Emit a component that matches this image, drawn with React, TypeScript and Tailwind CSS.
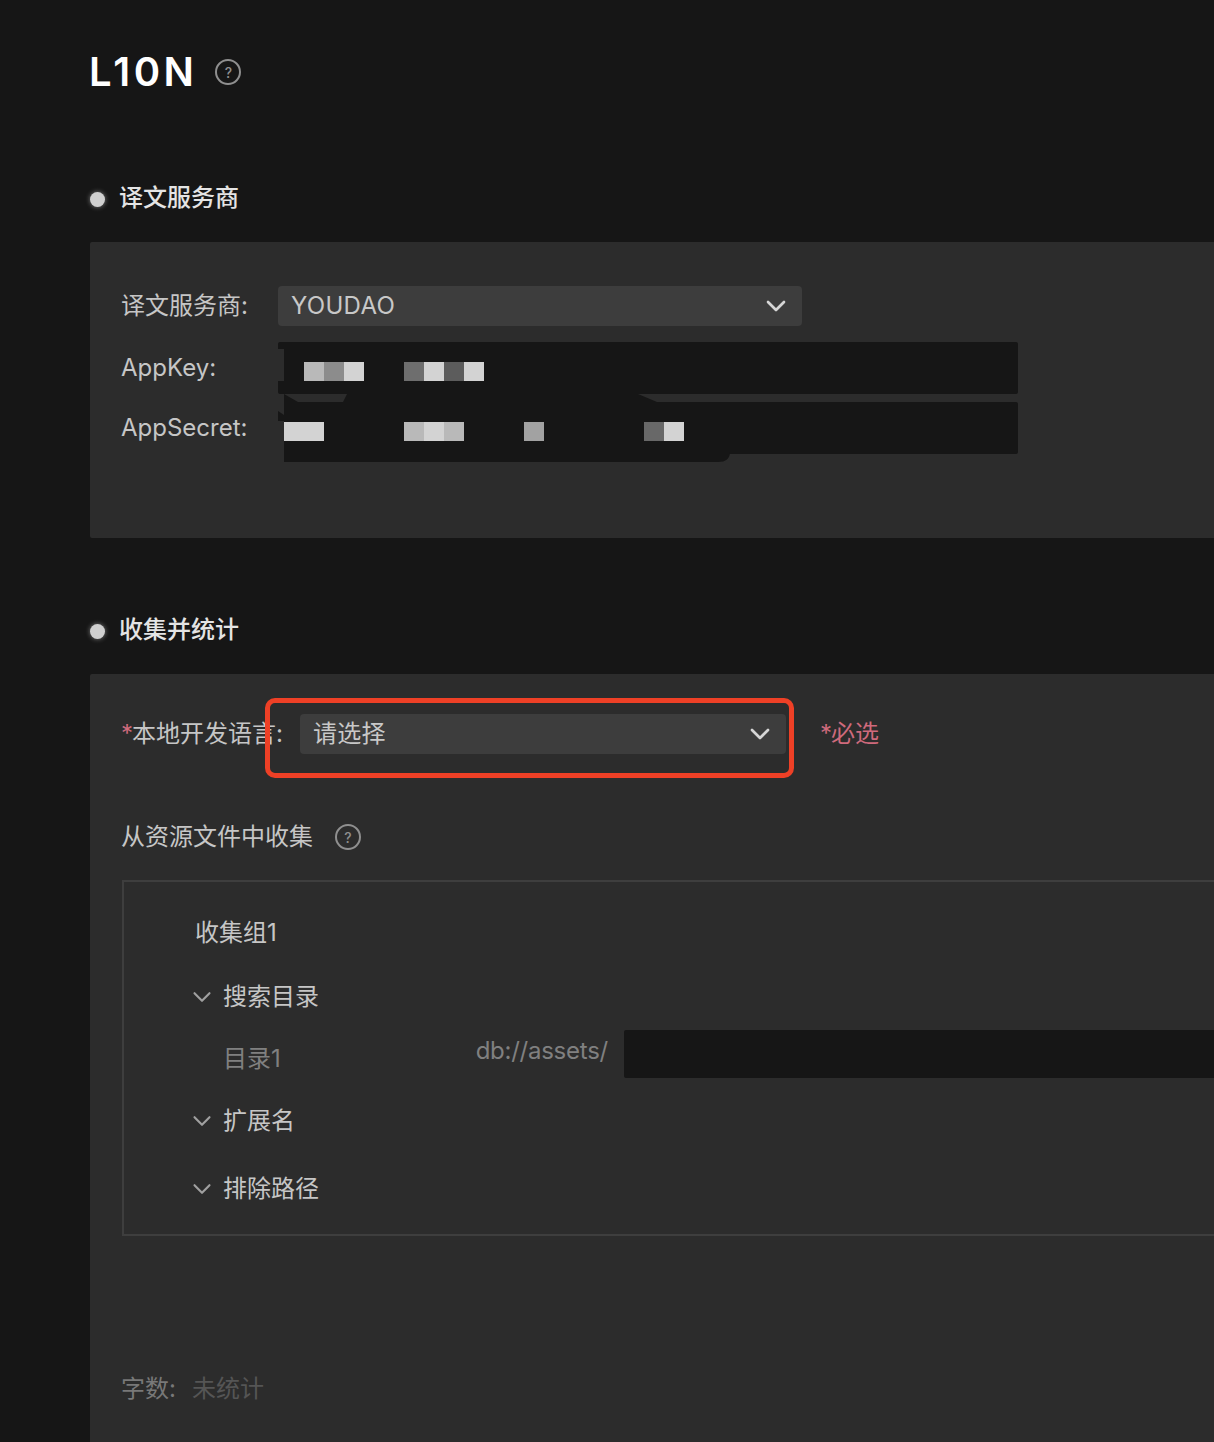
import { ChevronDown } from 'lucide-react'

const cjk = 'font-["Inter","Noto_Sans_CJK_SC",sans-serif]'

const HelpIcon = ({ size = 26 }: { size?: number }) => (
  <span
    className="flex items-center justify-center rounded-full border-2 border-[#8f8f8f] font-medium text-[#8f8f8f]"
    style={{ width: size, height: size, fontSize: 14 }}
  >
    ?
  </span>
)

const SectionHead = ({ title }: { title: string }) => (
  <div className="flex h-[32px] items-center">
    <span className="h-[15px] w-[15px] translate-y-[1px] rounded-full bg-[#d0d0d0] shadow-[0_0_5px_rgba(255,255,255,0.45)]" />
    <span className="ml-[14px] text-[24px] font-medium leading-[32px] text-[#e4e4e4]">{title}</span>
  </div>
)

const Select = ({ value, className }: { value: string; className: string }) => (
  <div className={`flex h-[40px] items-center justify-between rounded-[4px] bg-[#3d3d3d] pl-[13px] pr-[10px] text-[24px] text-[#c8c8c8] ${className}`}>
    <span className="tracking-[0.3px]">{value}</span>
    <ChevronDown size={32} strokeWidth={2} className="text-[#d6d6d6]" />
  </div>
)

const Mosaic = ({ cells, className }: { cells: string[]; className: string }) => (
  <div className={`absolute flex h-[19px] ${className}`}>
    {cells.map((c, i) => (
      <span key={i} className={`h-full w-[20px] ${c}`} />
    ))}
  </div>
)

const TreeRow = ({ label, className }: { label: string; className: string }) => (
  <div className={`flex items-center text-[24px] leading-[32px] text-[#c6c6c6] ${className}`}>
    <ChevronDown size={30} strokeWidth={1.7} className="-m-[4px] text-[#a0a0a0]" />
    <span className="ml-[10px]">{label}</span>
  </div>
)

export default function App() {
  return (
    <div className={`relative h-[1442px] w-[1214px] overflow-hidden bg-[#161616] pl-[90px] pt-[46px] ${cjk}`}>
      <div className="flex h-[52px] items-center">
        <h1 className="-ml-[1px] text-[40px] font-semibold leading-[52px] tracking-[3.5px] text-white">L10N</h1>
        <span className="ml-[18px]"><HelpIcon /></span>
      </div>

      <div className="mt-[84px]"><SectionHead title="译文服务商" /></div>

      <section className="relative mt-[28px] h-[296px] w-[1200px] rounded-[2px] bg-[#2c2c2c] px-[32px] pt-[44px]">
        <div className="flex items-center">
          <label className="-ml-[1px] w-[157px] text-[24px] text-[#c6c6c6]">译文服务商:</label>
          <Select value="YOUDAO" className="w-[524px]" />
        </div>
        <div className="mt-[16px] flex items-center">
          <label className="-ml-[1px] w-[157px] text-[24px] text-[#c6c6c6]">AppKey:</label>
          <div className="h-[52px] w-[740px] rounded-[2px] bg-[#161616]" />
        </div>
        <div className="mt-[8px] flex items-center">
          <label className="-ml-[1px] w-[157px] text-[24px] text-[#c6c6c6]">AppSecret:</label>
          <div className="h-[52px] w-[740px] rounded-[2px] bg-[#161616]" />
        </div>

        {/* hand drawn redaction over the keys */}
        <svg className="absolute left-[188px] top-[100px]" width="460" height="124" viewBox="278 342 460 124">
          <path d="M284 394 L298 402 L343 402 L347 394 L638 394 L657 402 L730 402 L730 452 Q730 462 718 462 L284 462 Z" fill="#161616" />
          <path d="M278 349 H284 V381 H278 Z M278 394 H284 V415 L278 411 Z M278 421 H284 V454 H278 Z" fill="#2c2c2c" />
        </svg>
        <Mosaic className="left-[214px] top-[120px]" cells={['bg-[#b9b9b9]', 'bg-[#8c8c8c]', 'bg-[#d3d3d3]']} />
        <Mosaic className="left-[314px] top-[120px]" cells={['bg-[#6e6e6e]', 'bg-[#d3d3d3]', 'bg-[#5c5c5c]', 'bg-[#d3d3d3]']} />
        <Mosaic className="left-[194px] top-[180px]" cells={['bg-[#d3d3d3]', 'bg-[#d3d3d3]']} />
        <Mosaic className="left-[314px] top-[180px]" cells={['bg-[#b9b9b9]', 'bg-[#d3d3d3]', 'bg-[#b9b9b9]']} />
        <Mosaic className="left-[434px] top-[180px]" cells={['bg-[#a2a2a2]']} />
        <Mosaic className="left-[554px] top-[180px]" cells={['bg-[#686868]', 'bg-[#d3d3d3]']} />
      </section>

      <div className="mt-[76px]"><SectionHead title="收集并统计" /></div>

      <section className="relative mt-[28px] h-[800px] w-[1200px] rounded-[2px] bg-[#2c2c2c] px-[32px] pt-[40px]">
        <div className="flex items-center">
          <label className="-ml-[1px] w-[179px] text-[24px] text-[#c6c6c6]">
            <span className="-mr-[1px] text-[#cf6a7c]">*</span>本地开发语言:
          </label>
          <Select value="请选择" className="w-[486px]" />
          <span className="ml-[34px] text-[24px] text-[#cf6a7c]">
            <span className="-mr-[1px]">*</span>必选
          </span>
        </div>

        {/* red annotation from the screenshot */}
        <div className="absolute left-[175px] top-[24px] h-[80px] w-[529px] rounded-[10px] border-[5px] border-[#ee4026]" />

        <div className="-ml-[1px] mt-[67px] flex h-[32px] items-center text-[24px] text-[#c6c6c6]">
          从资源文件中收集
          <span className="ml-[22px]"><HelpIcon /></span>
        </div>

        <div className="relative mt-[27px] h-[356px] w-[1200px] border-2 border-[#3e3e3e] pl-[71px] pt-[35px]">
          <div className="text-[24px] leading-[32px] text-[#c6c6c6]">收集组1</div>
          <TreeRow label="搜索目录" className="-ml-[4px] mt-[32px]" />
          <div className="mt-[17px] flex h-[48px] items-center">
            <span className="ml-[28px] w-[254px] translate-y-[5px] text-[24px] text-[#808080]">目录1</span>
            <span className="w-[149px] -translate-y-[3px] text-[24px] tracking-[-0.25px] text-[#808080]">db://assets/</span>
            <div className="h-[48px] w-[700px] rounded-[2px] bg-[#161616]" />
          </div>
          <TreeRow label="扩展名" className="-ml-[4px] mt-[27px]" />
          <TreeRow label="排除路径" className="-ml-[4px] mt-[36px]" />
        </div>

        <div className="-ml-[1px] mt-[137px] flex h-[32px] items-center text-[24px]">
          <span className="text-[#787878]">字数:</span>
          <span className="ml-[16px] text-[#555555]">未统计</span>
        </div>
      </section>
    </div>
  )
}
